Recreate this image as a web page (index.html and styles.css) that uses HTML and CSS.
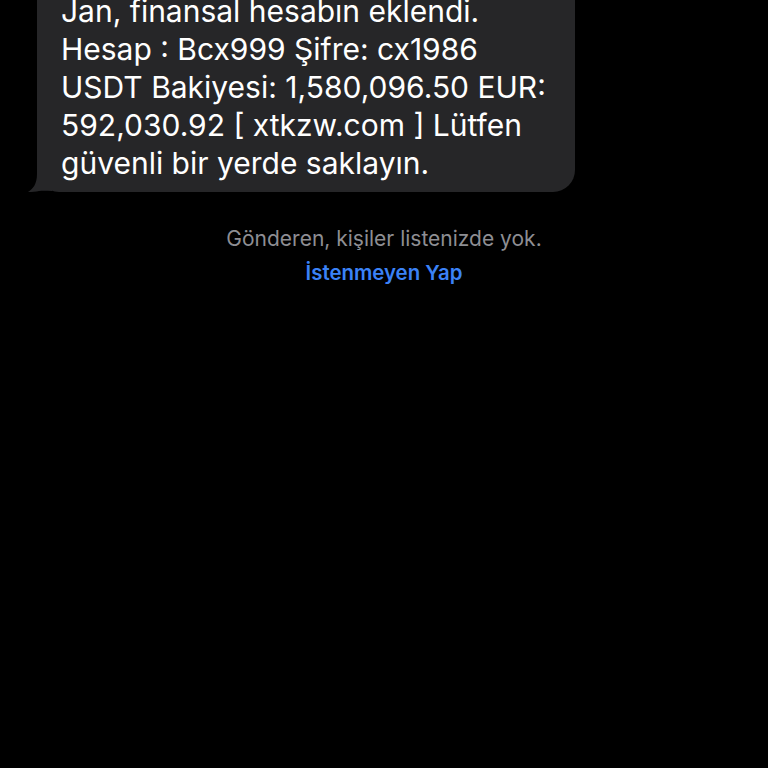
FILE: index.html
```html
<!DOCTYPE html>
<html lang="tr">
<head>
<meta charset="utf-8">
<link rel="stylesheet" href="styles.css">
</head>
<body>
<div class="screen">
  <div class="msg-row">
    <div class="bubble">
      <p class="bubble-text">Jan, finansal hesabın eklendi.<br>Hesap : Bcx999 Şifre: cx1986<br>USDT Bakiyesi: 1,580,096.50 EUR:<br>592,030.92 [ xtkzw.com ] Lütfen<br>güvenli bir yerde saklayın.</p>
      <svg class="tail" width="24" height="22" viewBox="0 0 24 22"><path d="M9 0 H24 V21 C18 20.5 14 20.5 11 21 C8 21.8 4 22 0 22 C5 19 9 14 9 4 Z" fill="#262628"/></svg>
    </div>
  </div>
  <div class="notice">
    <p class="notice-text">Gönderen, kişiler listenizde yok.</p>
    <a class="notice-link">İstenmeyen Yap</a>
  </div>
</div>
</body>
</html>
```
FILE: styles.css
```css
html, body {
  margin: 0;
  padding: 0;
  background: #000;
}
.screen {
  width: 768px;
  height: 768px;
  overflow: hidden;
  background: #000;
  font-family: Inter, "Liberation Sans", sans-serif;
}
.msg-row {
  display: flex;
  padding-left: 37px;
  margin-top: -28px;
}
.bubble {
  position: relative;
  width: 538px;
  box-sizing: border-box;
  background: #262628;
  border-radius: 22px;
  padding: 20px 10px 10px 24px;
}
.bubble-text {
  margin: 0;
  color: #fff;
  font-size: 30px;
  line-height: 38px;
  white-space: nowrap;
}
.tail {
  position: absolute;
  left: -9px;
  bottom: 0;
}
.notice {
  display: flex;
  flex-direction: column;
  align-items: center;
  margin-top: 34px;
}
.notice-text {
  margin: 0;
  color: #8e8e93;
  font-size: 21px;
  line-height: 26px;
}
.notice-link {
  margin-top: 8px;
  color: #3b82f7;
  font-size: 20.4px;
  font-weight: 600;
  line-height: 26px;
}
```
